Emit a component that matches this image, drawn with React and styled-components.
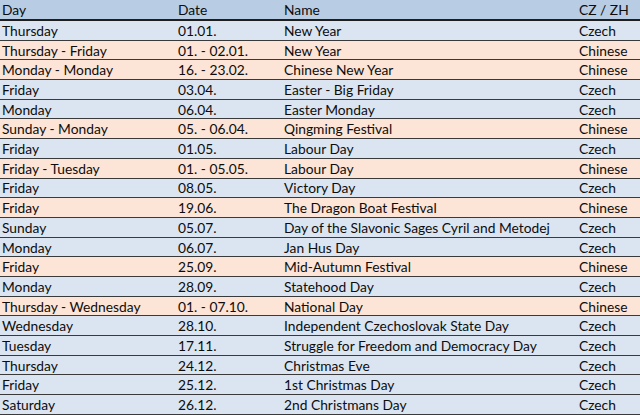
import styled, { createGlobalStyle } from 'styled-components';

const GlobalStyle = createGlobalStyle`
  html, body {
    margin: 0;
    padding: 0;
    background: #ffffff;
  }
`;

const holidays = [
  ['Thursday', '01.01.', 'New Year', 'Czech'],
  ['Thursday - Friday', '01. - 02.01.', 'New Year', 'Chinese'],
  ['Monday - Monday', '16. - 23.02.', 'Chinese New Year', 'Chinese'],
  ['Friday', '03.04.', 'Easter - Big Friday', 'Czech'],
  ['Monday', '06.04.', 'Easter Monday', 'Czech'],
  ['Sunday - Monday', '05. - 06.04.', 'Qingming Festival', 'Chinese'],
  ['Friday', '01.05.', 'Labour Day', 'Czech'],
  ['Friday - Tuesday', '01. - 05.05.', 'Labour Day', 'Chinese'],
  ['Friday', '08.05.', 'Victory Day', 'Czech'],
  ['Friday', '19.06.', 'The Dragon Boat Festival', 'Chinese'],
  ['Sunday', '05.07.', 'Day of the Slavonic Sages Cyril and Metodej', 'Czech'],
  ['Monday', '06.07.', 'Jan Hus Day', 'Czech'],
  ['Friday', '25.09.', 'Mid-Autumn Festival', 'Chinese'],
  ['Monday', '28.09.', 'Statehood Day', 'Czech'],
  ['Thursday - Wednesday', '01. - 07.10.', 'National Day', 'Chinese'],
  ['Wednesday', '28.10.', 'Independent Czechoslovak State Day', 'Czech'],
  ['Tuesday', '17.11.', 'Struggle for Freedom and Democracy Day', 'Czech'],
  ['Thursday', '24.12.', 'Christmas Eve', 'Czech'],
  ['Friday', '25.12.', '1st Christmas Day', 'Czech'],
  ['Saturday', '26.12.', '2nd Christmans Day', 'Czech'],
];

const Sheet = styled.div`
  width: 640px;
  height: 415px;
  overflow: hidden;
  font-family: Lato, "Open Sans", sans-serif;
  font-size: 13.8px;
  color: #0d0d0d;
`;

const Row = styled.div`
  display: grid;
  grid-template-columns: 176px 106px 295px 63px;
  height: ${(p) => (p.$head ? '19px' : '18.7px')};
  align-items: center;
  background: ${(p) => (p.$head ? '#b8cce4' : p.$cn ? '#fce4d6' : '#dbe5f1')};
  border-bottom: ${(p) => (p.$head ? '2px solid #1e1e1e' : '1px solid #3a3a3a')};
`;

const Cell = styled.div`
  padding-left: 2px;
  white-space: nowrap;
  line-height: 1;
  padding-top: 1px;
`;

export default function App() {
  return (
    <Sheet>
      <GlobalStyle />
      <Row $head>
        <Cell>Day</Cell>
        <Cell>Date</Cell>
        <Cell>Name</Cell>
        <Cell>CZ / ZH</Cell>
      </Row>
      {holidays.map((h, i) => (
        <Row key={i} $cn={h[3] === 'Chinese'}>
          {h.map((t, j) => (
            <Cell key={j}>{t}</Cell>
          ))}
        </Row>
      ))}
    </Sheet>
  );
}
